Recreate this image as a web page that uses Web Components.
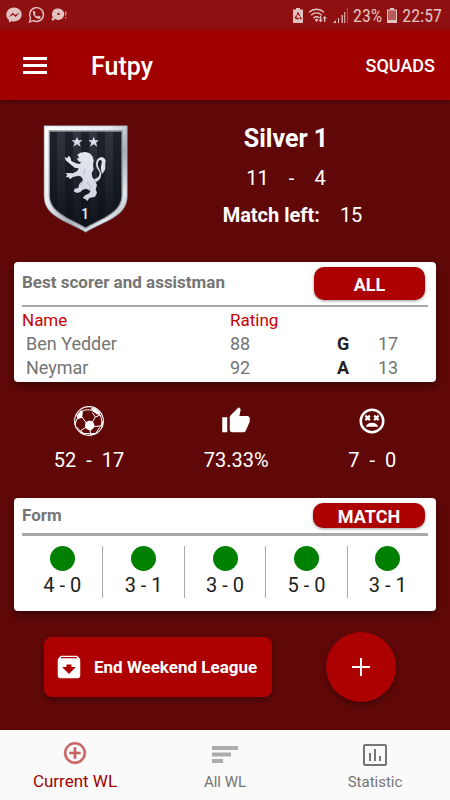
<!DOCTYPE html>
<html lang="en">
<head>
<meta charset="utf-8">
<meta name="viewport" content="width=device-width, initial-scale=1">
<title>Futpy</title>
<style>
html { height: 100%; }
body { margin: 0; min-height: 100%; font-family: Roboto, "Liberation Sans", sans-serif; --red: #ad0000; --bar: #a00000; --deep: #600808; --grey: #757575; --rule: #a9a9a9; background: #600808; }
</style>
</head>
<body>
<futpy-app></futpy-app>
<script>
const define = (name, html, setup) => {
  const template = document.createElement('template');
  template.innerHTML = html;
  customElements.define(name, class extends HTMLElement {
    constructor() {
      super();
      this.attachShadow({ mode: 'open' }).append(template.content.cloneNode(true));
    }
    connectedCallback() { if (setup) setup(this, this.shadowRoot); }
  });
};

const icons = {
  menu: ['0 0 24 18', '<path d="M0 0h24v3H0zM0 7h24v3H0zM0 14h24v3H0z"/>'],
  messenger: ['0 0 16 16', '<path fill-rule="evenodd" d="M8 .6C3.7.6.3 3.8.3 7.7c0 2.200 1 4.100 2.700 5.400V15.500l2.500-1.300c.8.2 1.600.3 2.500.3 4.300 0 7.700-3 7.700-6.900S12.300.6 8 .6zM2.700 10l4-4.300 2.500 2.200L13.400 5.400l-3.700 4.500-2.600-2.100z"/>'],
  whatsapp: ['0 0 18 18', '<path fill="none" stroke="currentColor" stroke-width="1.500" d="M1.700 16.300l1-4.200A7.300 7.300 0 1 1 5.700 15z"/><path d="M5.300 5l1.500-.5 1.300 2.400-.9 1.200c.7 1.300 1.500 2 2.800 2.600l1.100-1.100 2.300 1.200c0 1.600-1.200 2.400-2.500 2.200C8 12.500 4.800 9.200 5.300 5z"/>'],
  chat: ['0 0 16 14', '<path fill-rule="evenodd" d="M7.500.5a5.600 5.600 0 0 1 0 11.500 5 5 0 0 1-3-.8 5.600 5.600 0 0 1 3-10.700zM6.500 5v2h2V5zM.5 11a1.500 1.500 0 1 1 3 0 1.500 1.500 0 0 1-3 0zM14.300 3.500h1v4h-1zM14.300 9h1v1.500h-1z"/>'],
  recycle: ['0 0 10 15', '<path d="M3 0h4v1.500h3V15H0V1.500h3z"/><path fill="none" stroke="#8f1010" stroke-width="1.300" stroke-dasharray="3.200 1" d="M5 5L8 10.500H2z"/>'],
  wifi: ['0 0 20 15', '<path fill="none" stroke="currentColor" stroke-width="1.500" d="M1 4.200C5.500.2 11.500.2 16 4.200M3.200 7.200c3.200-2.900 7.400-2.900 10.600 0M5.500 10c2-1.700 4-1.700 6 0"/><path d="M6.700 11.700L8.500 10.500l1.900 1.200-1.900 2.300zM12 8h1.300v3.800H15L12.700 14.300 10.500 11.800H12zM16 14h1.300v-3.500H19L16.700 8l-2.200 2.500H16z"/>'],
  signal: ['0 0 15 15', '<path d="M0 15l3-3v3zM5 10h1v5H5zM8.500 7h1.300v8H8.500z"/><path d="M11 4h1.300v11H11z" opacity=".8"/><path d="M14 0h1v15h-1z" opacity=".35"/>'],
  battery: ['0 0 10 15', '<path d="M3 0h4v1.500h3V15H0V1.500h3z"/><path fill="#b85a5a" d="M1 2.500h8V12H1z"/>'],
  thumb: ['0 0 24 24', '<path d="M1 21h4V9H1v12zm22-11c0-1.100-.9-2-2-2h-6.310l.95-4.570.03-.32c0-.41-.17-.79-.44-1.060L14.170 1 7.590 7.590C7.220 7.950 7 8.450 7 9v10c0 1.100.9 2 2 2h9c.83 0 1.540-.5 1.840-1.220l3.020-7.050c.09-.23.14-.47.14-.73v-2z"/>'],
  dead: ['0 0 24 24', '<circle cx="12" cy="12" r="9" fill="none" stroke="currentColor" stroke-width="2"/><path d="M7 16.500c.7-2.300 2.600-3.200 5-3.200s4.300.9 5 3.200z"/><path fill="none" stroke="currentColor" stroke-width="1.700" d="M6.700 7.700l3.600 3.600m0-3.600l-3.600 3.600M13.700 7.700l3.600 3.600m0-3.600l-3.600 3.600"/>'],
  ball: ['0 0 30 30', '<circle cx="15" cy="15" r="14.400" fill="none" stroke="currentColor" stroke-width="1.100"/><path fill="none" stroke="currentColor" stroke-width="1" d="M8 11l4 5.500M18.700 15.700l2.600-4.700-3-4.500M21.300 11l5-2M21 20.700l5.500-1M11 21.700L7 24.500M16 25l.7 2.500M8.300 5c3-1.400 7-1.600 10-.5M8 11.200L3 13l-1.500 4M2.500 21l4 4M10 27.500l6.500 0M22 27l4-6.500M26.500 9l1.700 8"/><path d="M11.300 16.500l3.700-2 4 1 2 5-4.500 4.500-5.500-3zM2.500 9.500L7 4.200l2 .8-.8 6-5 2zM17 2l4 .2 5 4.300.2 2.500-3-.5-4.700-3.300zM27.500 16l1.800-1-.8 5-2.200 1.200zM.7 14l1.200 3-.3 5-1-4zM5.500 23.700l4.500 3.300.5 2-3.500-2zM16 27.300l6.500-.5-2 1.700-4 1z"/>'],
  archive: ['0 0 24 24', '<path fill-rule="evenodd" d="M20.540 5.230l-1.390-1.680C18.880 3.210 18.470 3 18 3H6c-.47 0-.88.21-1.160.55L3.460 5.230C3.170 5.570 3 6.020 3 6.500V19c0 1.100.9 2 2 2h14c1.100 0 2-.9 2-2V6.500c0-.48-.17-.93-.46-1.270zM12 17.500L6.500 12H10v-2h4v2h3.500L12 17.500zM5.120 5l.81-1h12l.94 1H5.120z"/>'],
  plus: ['0 0 18 18', '<path d="M8 0h2v8h8v2h-8v8H8v-8H0V8h8z"/>'],
  add: ['0 0 24 24', '<path d="M13 7h-2v4H7v2h4v4h2v-4h4v-2h-4V7zm-1-5C6.480 2 2 6.480 2 12s4.480 10 10 10 10-4.480 10-10S17.520 2 12 2zm0 18c-4.410 0-8-3.590-8-8s3.590-8 8-8 8 3.590 8 8-3.590 8-8 8z" stroke="currentColor" stroke-width=".5"/>'],
  sort: ['0 0 26 18', '<path d="M0 0h26v4H0zM0 6.500h19v4H0zM0 13h11v4H0z"/>'],
  chart: ['0 0 24 22', '<path fill-rule="evenodd" d="M2 0h20a2 2 0 0 1 2 2v18a2 2 0 0 1-2 2H2a2 2 0 0 1-2-2V2a2 2 0 0 1 2-2zm0 2v18h20V2zM6 9h2v8H6zM11 5h2v12h-2zM16 12h2v5h-2z"/>']
};

define('ui-icon', `<style>
:host { display: inline-flex; flex: none; width: 24px; height: 24px; }
svg { width: 100%; height: 100%; display: block; fill: currentColor; }
</style>`, (el, root) => {
  const [box, body] = icons[el.getAttribute('name')];
  root.innerHTML += `<svg viewBox="${box}" aria-hidden="true">${body}</svg>`;
});

define('status-bar', `<style>
:host { display: flex; justify-content: space-between; align-items: center; height: 30px; box-sizing: border-box; padding: 0 8px 0 6px; background: #8f1010; color: #e2c1c1; font-size: 18px; }
div { display: flex; align-items: center; }
.left { gap: 6px; } .right { gap: 5px; }
.sm { width: 16px; height: 16px; } .wa { width: 17px; height: 18px; } .bat { width: 10px; height: 15px; } .wifi { width: 20px; height: 15px; } .sig { width: 15px; height: 15px; }
span { font-family: "Roboto Condensed", Roboto, sans-serif; }
</style>
<div class="left"><ui-icon class="sm" name="messenger"></ui-icon><ui-icon class="wa" name="whatsapp"></ui-icon><ui-icon class="sm" name="chat"></ui-icon></div>
<div class="right"><ui-icon class="bat" name="recycle"></ui-icon><ui-icon class="wifi" name="wifi"></ui-icon><ui-icon class="sig" name="signal"></ui-icon><span>23%</span><ui-icon class="bat" name="battery"></ui-icon><span>22:57</span></div>`);

define('app-bar', `<style>
:host { display: flex; align-items: center; height: 70px; box-sizing: border-box; padding: 2px 15px 0 23px; background: var(--bar); color: #fff; position: relative; box-shadow: 0 2px 5px rgba(0,0,0,.35); }
button { border: 0; padding: 0; background: none; color: inherit; font: 500 18px/24px Roboto, sans-serif; }
.menu { display: flex; margin-right: 44px; } .menu ui-icon { width: 24px; height: 18px; }
h1 { flex: 1; margin: 0; font-size: 25px; line-height: 30px; font-weight: 500; padding-top: 2px; }
</style>
<button class="menu" aria-label="Menu"><ui-icon name="menu"></ui-icon></button><h1><slot></slot></h1><button>SQUADS</button>`);

define('rank-crest', `<style>
:host { display: block; width: 86px; height: 110px; }
svg { display: block; width: 100%; height: 100%; font: 500 46px "Roboto Condensed", Roboto, sans-serif; }
</style>
<svg viewBox="42 42 258 330" role="img" aria-label="Silver crest">
<defs>
<linearGradient id="rim" x1="0" y1="0" x2="1" y2="1"><stop offset="0" stop-color="#fff"/><stop offset=".4" stop-color="#e9ebef"/><stop offset=".6" stop-color="#a9aeb7"/><stop offset=".8" stop-color="#e6e8ec"/><stop offset="1" stop-color="#8c929c"/></linearGradient>
<linearGradient id="field" x1="0" y1="0" x2="0" y2="1"><stop offset="0" stop-color="#30353f"/><stop offset="1" stop-color="#101319"/></linearGradient>
<linearGradient id="lion" x1="0" y1="0" x2="0" y2="1"><stop offset="0" stop-color="#e4e8f0"/><stop offset="1" stop-color="#cdd4e2"/></linearGradient>
<clipPath id="inside"><path d="M63 65H277V255C277 308 217 324 170 352C123 324 63 308 63 255z"/></clipPath>
</defs>
<path d="M45 47H295V258C295 322 222 334 170 367C118 334 45 322 45 258z" fill="url(#rim)" stroke="#737984" stroke-width="2"/>
<path d="M59 61H281V255C281 311 219 327 170 356C121 327 59 311 59 255z" fill="#8d929b"/>
<path d="M63 65H277V255C277 308 217 324 170 352C123 324 63 308 63 255z" fill="url(#field)"/>
<g clip-path="url(#inside)" fill="#0c0f15" opacity=".5"><path d="M60 62h24v300H60zM108 62h24v300h-24zM156 62h24v300h-24zM204 62h24v300h-24zM252 62h28v300h-28z"/></g>
<g fill="url(#lion)">
<path d="M144 80l4 11h12l-9 7 4 12-11-7-11 7 4-12-9-7h12zM194 80l4 11h12l-9 7 4 12-11-7-11 7 4-12-9-7h12z"/>
<path d="M145 134L154 128 168 126 181 129 190 138 194 151 192 166 194 178 188 189 190 202 199 213 204 226 200 238 204 249 198 260 181 264 175 273 169 267 161 264 168 256 181 250 184 242 171 236 160 240 154 246 144 249 134 244 137 236 148 234 151 222 162 210 157 200 148 197 132 201 123 208 119 202 110 201 115 194 109 190 121 189 132 190 145 183 149 175 137 173 126 164 117 157 110 151 107 141 115 145 118 137 124 142 127 153 141 160 150 162 157 158 148 153 143 145 151 145z"/>
<path d="M195 208C211 203 216 192 208 181C198 169 199 149 211 143C222 138 233 147 229 158C227 164 232 173 226 183L218 194C220 184 213 180 216 169C218 160 221 151 214 150C206 151 204 166 211 177C222 194 215 211 201 216z"/>
</g>
<path d="M168 176l-4 19M163 211l-8 14M172 217l14 12-7 12" fill="none" stroke="#a3abbb" stroke-width="2"/>
<text x="168" y="326" fill="#e6eaf1" text-anchor="middle">1</text>
</svg>`);

define('rank-summary', `<style>
:host { display: grid; grid-template-columns: 172px 1fr; align-items: start; color: #fff; font-size: 20px; line-height: 24px; }
rank-crest { justify-self: center; margin-top: 24px; }
section { padding: 23px 50px 0 0; display: flex; flex-direction: column; align-items: center; }
h2 { margin: 0 0 11px; font-size: 25px; line-height: 32px; }
.record { display: flex; gap: 20px; margin-bottom: 13px; }
.left { display: flex; gap: 20px; padding-left: 13px; white-space: nowrap; }
</style>
<rank-crest></rank-crest><section><h2>Silver 1</h2><div class="record"><span>11</span><span>-</span><span>4</span></div><div class="left"><b>Match left:</b><span>15</span></div></section>`);

define('panel-card', `<style>
:host { display: block; background: #fff; border-radius: 4px; padding: 0 8px; box-shadow: 0 4px 8px rgba(0,0,0,.4); }
header { display: flex; justify-content: space-between; align-items: flex-start; padding: 5px 3px 5px 0; border-bottom: 2px solid var(--rule); }
h3 { margin: 4px 0 0; font-size: 17px; line-height: 22px; color: var(--grey); }
button { width: 111px; height: 33px; border: 0; border-radius: 10px; background: var(--red); color: #fff; font: 700 18px/24px Roboto, sans-serif; box-shadow: 0 1px 3px rgba(0,0,0,.4); padding: 2px 0 0; }
:host([compact]) header { border-bottom-width: 3px; }
:host([compact]) button { height: 25px; width: 112px; }
:host([compact]) h3 { margin-top: 1px; }
</style>
<header><h3><slot name="title"></slot></h3><button><slot name="action"></slot></button></header><slot></slot>`);

define('scorer-table', `<style>
:host { display: block; padding: 1px 0 2px; }
table { width: 100%; border-collapse: collapse; table-layout: fixed; font-size: 18px; line-height: 24px; color: var(--grey); }
th, td { padding: 0; text-align: left; font-weight: 400; height: 24px; }
thead th { color: #c80000; font-size: 17px; }
.name { width: 208px; } .rating { width: 107px; } .kind { width: 41px; }
tbody th { padding-left: 4px; }
b { color: #212121; }
</style>
<table><thead><tr><th class="name">Name</th><th class="rating">Rating</th><td class="kind"></td><td></td></tr></thead>
<tbody><tr><th>Ben Yedder</th><td>88</td><td><b>G</b></td><td>17</td></tr><tr><th>Neymar</th><td>92</td><td><b>A</b></td><td>13</td></tr></tbody></table>`);

define('stat-item', `<style>
:host { display: flex; flex-direction: column; align-items: center; gap: 12px; color: #fff; font-size: 20px; line-height: 24px; }
ui-icon { width: 30px; height: 30px; }
.icon { display: flex; }
.value { display: flex; gap: 10px; }
</style><div class="icon"></div><div class="value"><slot></slot></div>`, (el, root) => {
  root.querySelector('.icon').innerHTML = `<ui-icon name="${el.getAttribute('icon')}"></ui-icon>`;
});

define('form-match', `<style>
:host { flex: 1; display: flex; flex-direction: column; align-items: center; box-sizing: border-box; height: 52px; font-size: 20px; line-height: 24px; color: #212121; }
:host(:not(:last-child)) { border-right: 1px solid var(--rule); }
i { width: 25px; height: 25px; border-radius: 50%; background: #008000; margin-bottom: 2px; }
</style><i></i><span><slot></slot></span>`);

define('nav-tab', `<style>
:host { flex: 1; display: flex; justify-content: center; color: var(--grey); }
a { color: inherit; text-decoration: none; display: flex; flex-direction: column; align-items: center; font-size: 15px; line-height: 20px; }
.icon { height: 26px; margin: 12px 0 4px; display: flex; align-items: center; }
.icon[data-icon=add] { margin: 10px 0 5px; color: #c76565; } .icon[data-icon=sort] { color: #adadad; }
[data-icon=add] ui-icon { width: 26px; height: 26px; } [data-icon=sort] ui-icon { width: 26px; height: 18px; } [data-icon=chart] ui-icon { width: 24px; height: 22px; }
:host([active]) a { color: var(--bar); font-size: 17px; }
</style><a href="#"><span class="icon"></span><span><slot></slot></span></a>`, (el, root) => {
  const holder = root.querySelector('.icon'), name = el.getAttribute('icon');
  holder.dataset.icon = name;
  holder.innerHTML = `<ui-icon name="${name}"></ui-icon>`;
  if (el.hasAttribute('active')) root.querySelector('a').setAttribute('aria-current', 'page');
});

define('futpy-app', `<style>
:host { display: flex; flex-direction: column; min-height: 100vh; }
main { flex: 1; background: var(--deep); padding: 0 14px 28px; }
rank-summary { margin: 0 -14px; min-height: 162px; }
.stats { display: flex; justify-content: space-around; padding: 24px 0 26px; }
.form { display: flex; padding: 10px 0 13px; }
.actions { display: flex; justify-content: space-between; align-items: center; padding: 21px 40px 0 30px; }
.actions button { border: 0; padding: 0; color: #fff; background: var(--red); box-shadow: 0 3px 6px rgba(0,0,0,.35); }
.actions .end { display: flex; align-items: center; gap: 10px; width: 228px; height: 60px; padding-left: 10px; border-radius: 8px; font: 700 17px/24px Roboto, sans-serif; white-space: nowrap; }
.end ui-icon { width: 30px; height: 30px; }
.fab { display: flex; align-items: center; justify-content: center; width: 70px; height: 70px; border-radius: 50%; }
.fab ui-icon { width: 18px; height: 18px; }
nav { display: flex; height: 70px; background: #fafafa; }
</style>
<status-bar></status-bar><app-bar>Futpy</app-bar>
<main>
<rank-summary></rank-summary>
<panel-card><span slot="title">Best scorer and assistman</span><span slot="action">ALL</span><scorer-table></scorer-table></panel-card>
<div class="stats"><stat-item icon="ball"><span>52</span><span>-</span><span>17</span></stat-item><stat-item icon="thumb">73.33%</stat-item><stat-item icon="dead"><span>7</span><span>-</span><span>0</span></stat-item></div>
<panel-card compact><span slot="title">Form</span><span slot="action">MATCH</span><div class="form"><form-match>4 - 0</form-match><form-match>3 - 1</form-match><form-match>3 - 0</form-match><form-match>5 - 0</form-match><form-match>3 - 1</form-match></div></panel-card>
<div class="actions"><button class="end"><ui-icon name="archive"></ui-icon><span>End Weekend League</span></button><button class="fab" aria-label="Add match"><ui-icon name="plus"></ui-icon></button></div>
</main>
<nav><nav-tab icon="add" active>Current WL</nav-tab><nav-tab icon="sort">All WL</nav-tab><nav-tab icon="chart">Statistic</nav-tab></nav>`);
</script>
</body>
</html>
